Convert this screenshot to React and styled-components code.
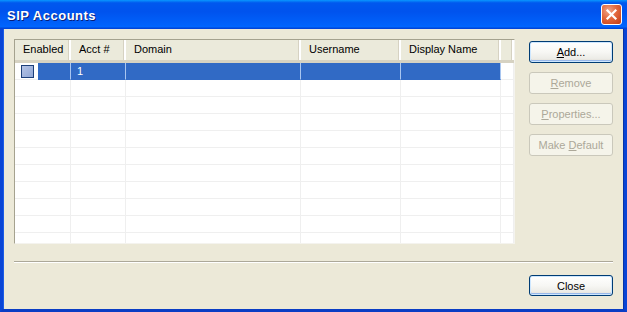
import React from "react";
import styled, { createGlobalStyle } from "styled-components";

const Global = createGlobalStyle`
  html, body { margin: 0; padding: 0; background: #ece9d8; overflow: hidden; }
  * { box-sizing: border-box; }
`;

const Window = styled.div`
  width: 627px;
  height: 312px;
  display: flex;
  flex-direction: column;
  background: #ece9d8;
  border-left: 3px solid #0a45d6;
  border-right: 3px solid #0a45d6;
  border-bottom: 3px solid #0a3dc4;
  box-shadow: inset 1px 0 0 #1c5ce6, inset -1px 0 0 #0733a8;
  font-family: "Liberation Sans", Arial, sans-serif;
  font-size: 11px;
  color: #000;
`;

const TitleBar = styled.div`
  height: 29px;
  margin: 0 -3px;
  padding: 0 5px 0 7px;
  display: flex;
  align-items: center;
  justify-content: space-between;
  background: linear-gradient(
    #0997ff 0%, #0058ee 10%, #0053ee 40%, #0062fb 85%, #0066ff 92%, #0050e0 96%, #003dd7 100%
  );
`;

const Title = styled.span`
  color: #fff;
  font-weight: bold;
  font-size: 13px;
  letter-spacing: 0.5px;
  text-shadow: 1px 1px 0 #0a1e78;
  padding-top: 1px;
`;

const CloseBox = styled.div`
  width: 21px;
  height: 21px;
  border: 1px solid #fff;
  border-radius: 3px;
  background: radial-gradient(circle at 35% 30%, #f0a58a 0%, #e2683d 45%, #c23a14 100%);
  display: flex;
  align-items: center;
  justify-content: center;
`;

const Content = styled.div`
  flex: 1;
  display: flex;
  flex-direction: column;
  padding: 10px 11px 0 11px;
`;

const MainRow = styled.div`
  display: flex;
  gap: 14px;
`;

const List = styled.div`
  width: 501px;
  height: 205px;
  border: 1px solid #a5a28f;
  border-right-color: #f4f3ee;
  border-bottom-color: #f4f3ee;
  background: #fff;
  overflow: hidden;
`;

const Row = styled.div`
  display: flex;
  height: ${p => (p.$header ? "23px" : "17px")};
`;

const HeadCell = styled.div`
  width: ${p => p.$w}px;
  flex: none;
  padding-left: 8px;
  display: flex;
  align-items: center;
  padding-bottom: 2px;
  background: #ebeadb;
  border-bottom: 3px solid #d6d2c2;
  box-shadow: inset -2px 0 0 #fff, inset -3px 0 0 #d6d2c2;
  white-space: nowrap;
`;

const Cell = styled.div`
  width: ${p => p.$w}px;
  flex: none;
  padding-left: ${p => (p.$pad ?? 8)}px;
  display: flex;
  align-items: center;
  border-right: 1px solid #efefef;
  border-bottom: 1px solid #efefef;
  background: ${p => (p.$sel ? "#316ac5" : "#fff")};
  color: ${p => (p.$sel ? "#fff" : "#000")};
  ${p => p.$sel && "border-right-color: #a9c6f0; border-bottom-color: #316ac5;"}
  ${p => p.$plain && "border-right: none;"}
`;

const Check = styled.span`
  width: 13px;
  height: 13px;
  border: 1px solid #1c3f7a;
  background: linear-gradient(135deg, #b4c3e6, #90a6d4);
`;

const ButtonColumn = styled.div`
  width: 84px;
  display: flex;
  flex-direction: column;
  gap: 9px;
  padding-top: 2px;
`;

const Button = styled.div`
  width: 84px;
  height: ${p => (p.$h || 22)}px;
  display: flex;
  align-items: center;
  justify-content: center;
  border-radius: 3px;
  border: 1px solid ${p => (p.$disabled ? "#cac8bb" : "#003c74")};
  background: ${p =>
    p.$disabled
      ? "#f5f4ea"
      : "linear-gradient(#ffffff 0%, #f7f7f4 50%, #ecebe6 85%, #d6d0c5 100%)"};
  color: ${p => (p.$disabled ? "#aca899" : "#000")};
  box-shadow: ${p => (p.$default ? "inset 0 0 0 1px #cee7ff, inset 0 -1px 0 1px #98b8ea" : "none")};
  u { text-decoration: underline; }
`;

const Separator = styled.div`
  margin-top: 17px;
  height: 2px;
  border-top: 1px solid #aca899;
  border-bottom: 1px solid #fff;
`;

const Footer = styled.div`
  display: flex;
  justify-content: flex-end;
  padding-top: 12px;
`;

const cols = [
  { name: "Enabled", w: 56 },
  { name: "Acct #", w: 55 },
  { name: "Domain", w: 175 },
  { name: "Username", w: 100 },
  { name: "Display Name", w: 100 },
  { name: "", w: 13 },
];

export default function App() {
  const emptyRows = Array.from({ length: 10 });
  return (
    <>
      <Global />
      <Window>
        <TitleBar>
          <Title>SIP Accounts</Title>
          <CloseBox>
            <svg width="13" height="13" viewBox="0 0 13 13">
              <path d="M2.5 2.5 L10.5 10.5 M10.5 2.5 L2.5 10.5" stroke="#fff" strokeWidth="2.2" strokeLinecap="square" />
            </svg>
          </CloseBox>
        </TitleBar>
        <Content>
          <MainRow>
            <List>
              <Row $header>
                {cols.map((c, i) => (
                  <HeadCell key={i} $w={c.w}>{c.name}</HeadCell>
                ))}
              </Row>
              <Row>
                <Cell $w={23} $pad={6} $plain>
                  <Check />
                </Cell>
                <Cell $w={33} $sel />
                <Cell $w={55} $sel $pad={6}>1</Cell>
                <Cell $w={175} $sel />
                <Cell $w={100} $sel />
                <Cell $w={100} $sel />
                <Cell $w={13} />
              </Row>
              {emptyRows.map((_, r) => (
                <Row key={r}>
                  {cols.map((c, i) => (
                    <Cell key={i} $w={c.w} />
                  ))}
                </Row>
              ))}
            </List>
            <ButtonColumn>
              <Button $default><span><u>A</u>dd...</span></Button>
              <Button $disabled><span><u>R</u>emove</span></Button>
              <Button $disabled><span><u>P</u>roperties...</span></Button>
              <Button $disabled><span>Make <u>D</u>efault</span></Button>
            </ButtonColumn>
          </MainRow>
          <Separator />
          <Footer>
            <Button $default $h={21}>Close</Button>
          </Footer>
        </Content>
      </Window>
    </>
  );
}
